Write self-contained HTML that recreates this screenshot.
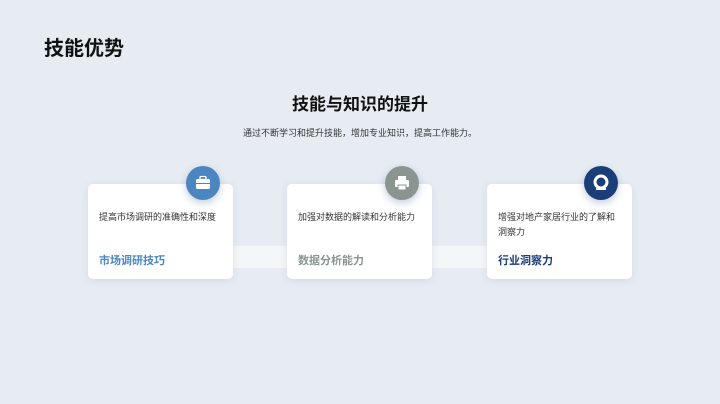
<!DOCTYPE html><html><head><meta charset="utf-8"><style>
body{margin:0;width:720px;height:404px;background:#e7ecf3;font-family:"Liberation Sans","Noto Sans CJK SC",sans-serif;position:relative;overflow:hidden}
.a{position:absolute}
.card{position:absolute;top:184px;width:145px;height:95px;background:#fff;border-radius:5px;box-shadow:0 2px 8px rgba(120,140,170,.18)}
.card .t{position:absolute;left:11px;top:26px;font-size:9px;color:#333;line-height:15px;width:124px}
.card .h{position:absolute;left:11px;top:68px;font-size:11px;font-weight:bold}
.c{position:absolute;top:166px;width:34px;height:34px;border-radius:50%;box-shadow:0 3px 8px rgba(60,90,140,.3)}
.con{position:absolute;top:246px;height:22px;background:#f5f6f8}
</style></head><body>
<div class="a" style="left:44px;top:32px;font-size:20px;font-weight:bold;color:#111">技能优势</div>
<div class="a" style="left:0;width:720px;top:90px;text-align:center;font-size:17px;font-weight:bold;color:#111">技能与知识的提升</div>
<div class="a" style="left:0;width:720px;top:126px;text-align:center;font-size:9px;color:#333">通过不断学习和提升技能，增加专业知识，提高工作能力。</div>
<div class="con" style="left:232px;width:55px"></div>
<div class="con" style="left:432px;width:55px"></div>
<div class="card" style="left:88px"><div class="t">提高市场调研的准确性和深度</div><div class="h" style="color:#4a86c0">市场调研技巧</div></div>
<div class="card" style="left:287px"><div class="t">加强对数据的解读和分析能力</div><div class="h" style="color:#8a9490">数据分析能力</div></div>
<div class="card" style="left:487px"><div class="t">增强对地产家居行业的了解和洞察力</div><div class="h" style="color:#1b3d78">行业洞察力</div></div>
<div class="c" style="left:186px;background:#4a86c0"><svg width="34" height="34"><rect x="10" y="13" width="14" height="10" rx="1.5" fill="#fff"/><rect x="14" y="10.5" width="6" height="3" rx="1" fill="none" stroke="#fff" stroke-width="1.3"/><rect x="10" y="17" width="14" height="1" fill="#4a86c0"/></svg></div>
<div class="c" style="left:385px;background:#8a9490"><svg width="34" height="34"><rect x="13" y="10" width="8" height="4" fill="#fff"/><rect x="10" y="14" width="14" height="7" rx="1" fill="#fff"/><rect x="13" y="19" width="8" height="5" fill="#fff" stroke="#8a9490" stroke-width="1"/></svg></div>
<div class="c" style="left:584px;background:#1b3d78"><svg width="34" height="34"><circle cx="17" cy="16" r="6" fill="none" stroke="#fff" stroke-width="3"/><rect x="12" y="22" width="10" height="2" fill="#fff"/></svg></div>
</body></html>
